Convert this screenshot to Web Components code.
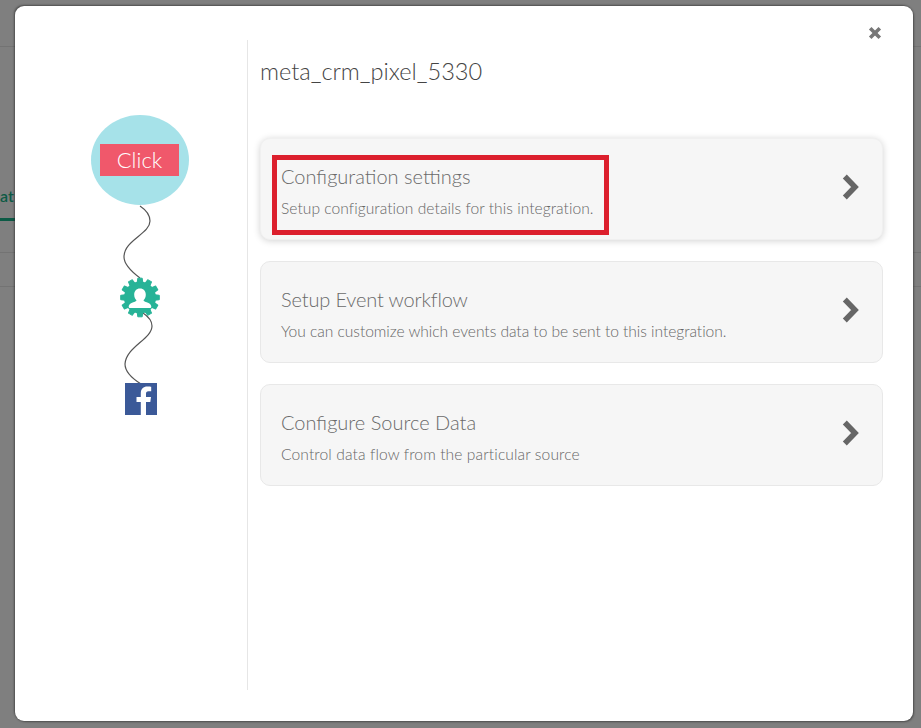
<!DOCTYPE html>
<html><head><meta charset="utf-8">
<style>
html,body{margin:0;padding:0;width:921px;height:728px;overflow:hidden;background:#7f7f7f;font-family:"Lato",sans-serif}
</style></head><body>
<template id="t-bg"><style>
:host{display:block;width:921px;height:728px;background:#7f7f7f;box-sizing:border-box;padding-top:46px;overflow:hidden}
.l{height:1px;background:#737373}
.tab{height:171px;box-sizing:border-box;padding-top:136px;width:15px;color:#0c5a45;font:600 16px/26px "Lato",sans-serif;white-space:nowrap}
.bar{height:3px;width:15px;background:#0c5a45}
.g{height:31px}
</style><div class="l"></div><div class="tab">at</div><div class="bar"></div><div class="g"></div><div class="l"></div><div class="g" style="height:33px"></div><div class="l"></div><slot></slot></template>

<template id="t-modal"><style>
:host{position:absolute;left:15px;top:6px;width:898px;height:715px;background:#fff;border-radius:9px;box-shadow:-1px -1px 2px rgba(40,40,40,.55),1px 1px 2px rgba(40,40,40,.55);display:grid;grid-template-columns:233px 1fr;box-sizing:border-box;padding:34px 30px 31px 0}
.left{border-right:1px solid #e6e6e6;height:650px}
.right{padding-left:12px;min-width:0}
.close{position:absolute;right:31px;top:19.500px;width:14px;height:14px}
h1{margin:0;font:300 23.600px/30px "Lato",sans-serif;color:#444;padding-top:16px;height:82px;box-sizing:content-box}
.cards{display:flex;flex-direction:column;gap:21px;}
</style>
<div class="left"><slot name="left"></slot></div>
<div class="right"><h1><slot name="title"></slot></h1><div class="cards"><slot></slot></div></div>
<svg class="close" viewBox="0 0 14 14"><path d="M2.200 2.200L11.800 11.800M11.800 2.200L2.200 11.800" stroke="#777" stroke-width="3.600" fill="none"/></svg>
</template>

<template id="t-card"><style>
:host{display:flex;align-items:center;justify-content:space-between;position:relative;box-sizing:border-box;height:102px;background:#f6f6f6;border:1px solid #e8e8e8;border-radius:10px;padding:3px 21px 0 20px}
:host([active]){box-shadow:0 1px 7px rgba(0,0,0,.18);border-color:#f0f0f0}
.t{font:300 20px/26px "Lato",sans-serif;color:#6a6a6a}
.d{font:300 15.600px/20px "Lato",sans-serif;color:#666;margin-top:9px}
svg{width:20px;height:28px;flex:none;margin-bottom:8px}
.mark{display:none;position:absolute;left:11px;top:16px;width:337px;height:80px;border:5px solid #dc1f2d;box-sizing:border-box}
:host([active]) .mark{display:block}
</style>
<div><div class="t"><slot name="t"></slot></div><div class="d"><slot name="d"></slot></div></div>
<svg viewBox="0 0 20 28"><path d="M3.800 3.500L14 14L3.800 24.500" stroke="#666" stroke-width="5.500" fill="none"/></svg>
<div class="mark"></div></template>

<template id="t-flow"><style>
:host{display:block;width:232px;height:650px}
svg{display:block}
text{font:300 22px "Lato",sans-serif;fill:#fff}
.tooth{fill:#27b397;stroke:#27b397;stroke-width:1;stroke-linejoin:round}
</style>
<svg width="232" height="650" viewBox="15 40 232 650">
<path d="M140 206C146 210 150 215 150 221C150 234 124 240 124 257C124 265 132 272 140 278" fill="none" stroke="#555" stroke-width="1.200"/>
<path d="M143 313C149 317 152 321 152 326C152 339 126 347 125 364C125 372 133 379 141 384" fill="none" stroke="#555" stroke-width="1.200"/>
<ellipse cx="140" cy="160" rx="49" ry="45" fill="#a6e2e9"/>
<rect x="100" y="144" width="79" height="32" fill="#f0586b"/>
<text x="139.500" y="168" text-anchor="middle">Click</text>
<g fill="#27b397" transform="translate(140 297.500)">
<circle r="16"/>
<path class="tooth" d="M-2.200 -19.300h4.400l.6 5h-5.600z"/>
<path class="tooth" d="M-2.200 -19.300h4.400l.6 5h-5.600z" transform="rotate(30)"/>
<path class="tooth" d="M-2.200 -19.300h4.400l.6 5h-5.600z" transform="rotate(60)"/>
<path class="tooth" d="M-2.200 -19.300h4.400l.6 5h-5.600z" transform="rotate(90)"/>
<path class="tooth" d="M-2.200 -19.300h4.400l.6 5h-5.600z" transform="rotate(120)"/>
<path class="tooth" d="M-2.200 -19.300h4.400l.6 5h-5.600z" transform="rotate(150)"/>
<path class="tooth" d="M-2.200 -19.300h4.400l.6 5h-5.600z" transform="rotate(180)"/>
<path class="tooth" d="M-2.200 -19.300h4.400l.6 5h-5.600z" transform="rotate(210)"/>
<path class="tooth" d="M-2.200 -19.300h4.400l.6 5h-5.600z" transform="rotate(240)"/>
<path class="tooth" d="M-2.200 -19.300h4.400l.6 5h-5.600z" transform="rotate(270)"/>
<path class="tooth" d="M-2.200 -19.300h4.400l.6 5h-5.600z" transform="rotate(300)"/>
<path class="tooth" d="M-2.200 -19.300h4.400l.6 5h-5.600z" transform="rotate(330)"/>
</g>
<path d="M140 288.500c3.600 0 5.800 2.700 5.800 6.200c0 2.400-1 4.300-2.300 5.500c0 1.300 2.600 1.700 5 2.800c2 1 2.800 2.600 2.800 3.800c0 .8-.6 1.200-1.500 1.200h-19.600c-.9 0-1.500-.4-1.500-1.200c0-1.200.8-2.800 2.800-3.800c2.400-1.100 5-1.500 5-2.800c-1.300-1.200-2.300-3.100-2.300-5.500c0-3.500 2.200-6.200 5.800-6.200z" fill="#fff"/>
<rect x="125" y="383" width="32" height="32" fill="#3b5998"/>
<path d="M146 415v-13h4.300l.7-5h-5v-3.200c0-1.500.5-2.500 2.500-2.500h2.700v-4.500c-.5 0-2-.2-3.900-.2c-3.900 0-6.500 2.400-6.500 6.700v3.700h-4.300v5h4.300v13z" fill="#fff"/>
</svg></template>

<script>
function reg(name,id){customElements.define(name,class extends HTMLElement{constructor(){super();this.attachShadow({mode:'open'}).appendChild(document.getElementById(id).content.cloneNode(true));}});}
reg('page-backdrop','t-bg');reg('integration-modal','t-modal');reg('option-card','t-card');reg('flow-diagram','t-flow');
</script>
<page-backdrop>
<integration-modal>
<flow-diagram slot="left"></flow-diagram>
<span slot="title">meta_crm_pixel_5330</span>
<option-card active><span slot="t">Configuration settings</span><span slot="d" style="letter-spacing:.04px">Setup configuration details for this integration.</span></option-card>
<option-card><span slot="t" style="letter-spacing:-.15px">Setup Event workflow</span><span slot="d" style="letter-spacing:-.045px">You can customize which events data to be sent to this integration.</span></option-card>
<option-card><span slot="t">Configure Source Data</span><span slot="d" style="letter-spacing:.11px">Control data flow from the particular source</span></option-card>
</integration-modal>
</page-backdrop>
</body></html>
